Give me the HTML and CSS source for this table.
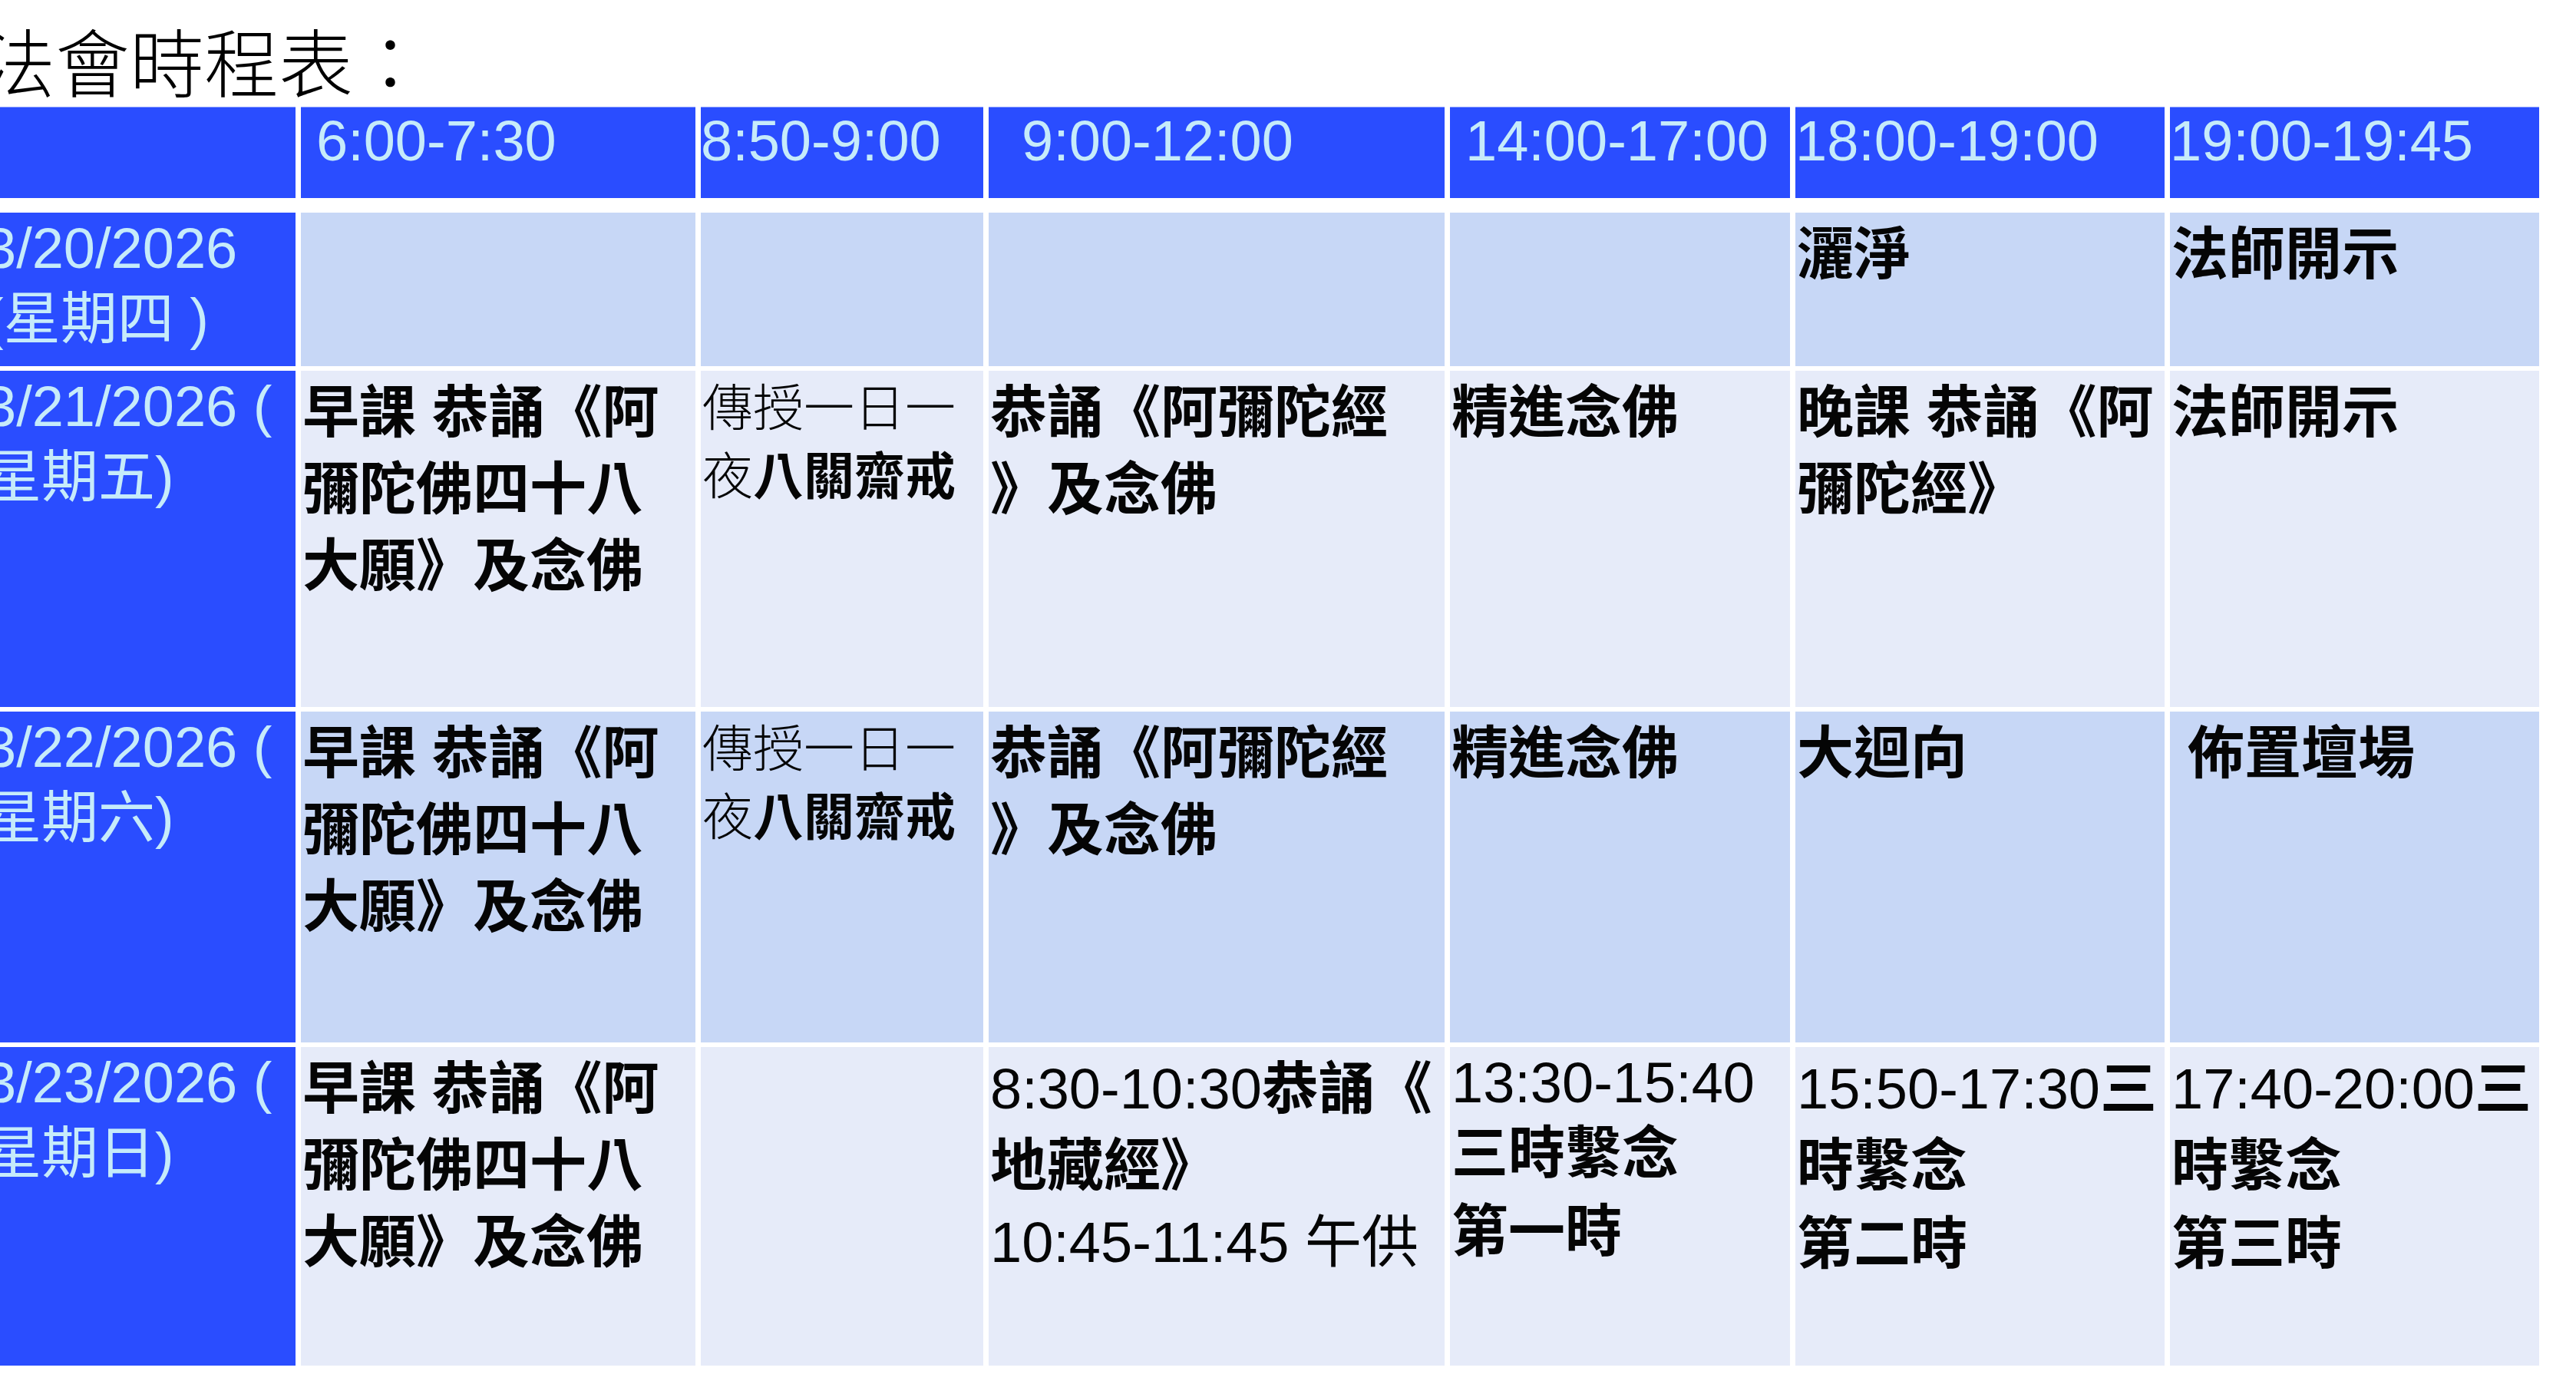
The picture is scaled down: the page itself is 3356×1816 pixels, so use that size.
FILE: index.html
```html
<!DOCTYPE html>
<html lang="zh-Hant">
<head>
<meta charset="utf-8">
<title>法會時程表</title>
<link rel="stylesheet" href="styles.css">
</head>
<body>
<div class="slide">
  <h1 class="title">法會時程表：</h1>
  <div class="grid">
    <div class="th"></div>
    <div class="th pad20">6:00-7:30</div>
    <div class="th pad0">8:50-9:00</div>
    <div class="th pad43">9:00-12:00</div>
    <div class="th pad20">14:00-17:00</div>
    <div class="th pad0">18:00-19:00</div>
    <div class="th pad0">19:00-19:45</div>

    <div class="date"><div class="ln-lat">3/20/2026</div><div class="ln">(星期四 )</div></div>
    <div class="td mid"></div>
    <div class="td mid"></div>
    <div class="td mid"></div>
    <div class="td mid"></div>
    <div class="td mid"><div class="ln b">灑淨</div></div>
    <div class="td mid"><div class="ln b">法師開示</div></div>

    <div class="date"><div class="ln-lat">3/21/2026 (</div><div class="ln">星期五)</div></div>
    <div class="td lite"><div class="ln b">早課 恭誦《阿</div><div class="ln b">彌陀佛四十八</div><div class="ln b">大願》及念佛</div></div>
    <div class="td lite small"><div class="ln2 l">傳授一日一</div><div class="ln2"><span class="l">夜</span><span class="b">八關齋戒</span></div></div>
    <div class="td lite"><div class="ln b">恭誦《阿彌陀經</div><div class="ln b">》及念佛</div></div>
    <div class="td lite"><div class="ln b">精進念佛</div></div>
    <div class="td lite"><div class="ln b">晚課 恭誦《阿</div><div class="ln b">彌陀經》</div></div>
    <div class="td lite"><div class="ln b">法師開示</div></div>

    <div class="date"><div class="ln-lat">3/22/2026 (</div><div class="ln">星期六)</div></div>
    <div class="td mid"><div class="ln b">早課 恭誦《阿</div><div class="ln b">彌陀佛四十八</div><div class="ln b">大願》及念佛</div></div>
    <div class="td mid small"><div class="ln2 l">傳授一日一</div><div class="ln2"><span class="l">夜</span><span class="b">八關齋戒</span></div></div>
    <div class="td mid"><div class="ln b">恭誦《阿彌陀經</div><div class="ln b">》及念佛</div></div>
    <div class="td mid"><div class="ln b">精進念佛</div></div>
    <div class="td mid"><div class="ln b">大迴向</div></div>
    <div class="td mid indent"><div class="ln b">佈置壇場</div></div>

    <div class="date"><div class="ln-lat">3/23/2026 (</div><div class="ln">星期日)</div></div>
    <div class="td lite"><div class="ln b">早課 恭誦《阿</div><div class="ln b">彌陀佛四十八</div><div class="ln b">大願》及念佛</div></div>
    <div class="td lite"></div>
    <div class="td lite"><div class="ln"><span class="n">8:30-10:30</span><span class="b">恭誦《</span></div><div class="ln b">地藏經》</div><div class="ln"><span class="n">10:45-11:45 午供</span></div></div>
    <div class="td lite"><div class="ln-lat">13:30-15:40</div><div class="ln b">三時繫念</div><div class="ln b para">第一時</div></div>
    <div class="td lite"><div class="ln"><span class="n">15:50-17:30</span><span class="b">三</span></div><div class="ln b">時繫念</div><div class="ln b para">第二時</div></div>
    <div class="td lite"><div class="ln"><span class="n">17:40-20:00</span><span class="b">三</span></div><div class="ln b">時繫念</div><div class="ln b para">第三時</div></div>
  </div>
</div>
</body>
</html>
```

FILE: styles.css
```css
html, body {
  margin: 0;
  padding: 0;
  background: #ffffff;
  overflow: hidden;
}

.slide {
  margin-left: -25px;
  width: 3340px;
}

.title {
  margin: 0;
  padding-top: 15px;
  height: 124px;
  font-family: "Noto Sans CJK TC", "Noto Sans CJK SC", sans-serif;
  font-size: 97px;
  line-height: 124px;
  font-weight: 300;
  color: #000000;
  white-space: nowrap;
}

.grid {
  display: grid;
  grid-template-columns: 410px 514px 368px 594px 443px 481px 481px;
  grid-template-rows: 132px 200px 438px 431px 415px;
  column-gap: 7px;
  row-gap: 6px;
  font-family: "Liberation Sans", "Noto Sans CJK TC", sans-serif;
  font-size: 74px;
}

.th {
  margin-bottom: 13px;
  background: #2a4dff;
  color: #c6ebfa;
  line-height: 90px;
  white-space: nowrap;
  box-shadow: inset 0 1px 0 #8fa3ff;
}

.pad0 { padding-left: 0; }
.pad20 { padding-left: 20px; }
.pad43 { padding-left: 43px; }

.date {
  background: #2a4dff;
  color: #c6ebfa;
  padding: 5px 0 0 5px;
  white-space: nowrap;
}

.td {
  padding: 5px 0 0 2px;
  color: #050505;
  white-space: nowrap;
}

.mid { background: #c7d7f6; }
.lite { background: #e6ebf9; }

.indent { padding-left: 23px; }

.ln { line-height: 100px; }
.ln-lat { line-height: 84px; }
.para { margin-top: 2px; }

.small { font-size: 66px; }
.ln2 { line-height: 89px; }

.b { font-weight: 700; }
.l { font-weight: 300; }
.n { font-weight: 400; }
```
